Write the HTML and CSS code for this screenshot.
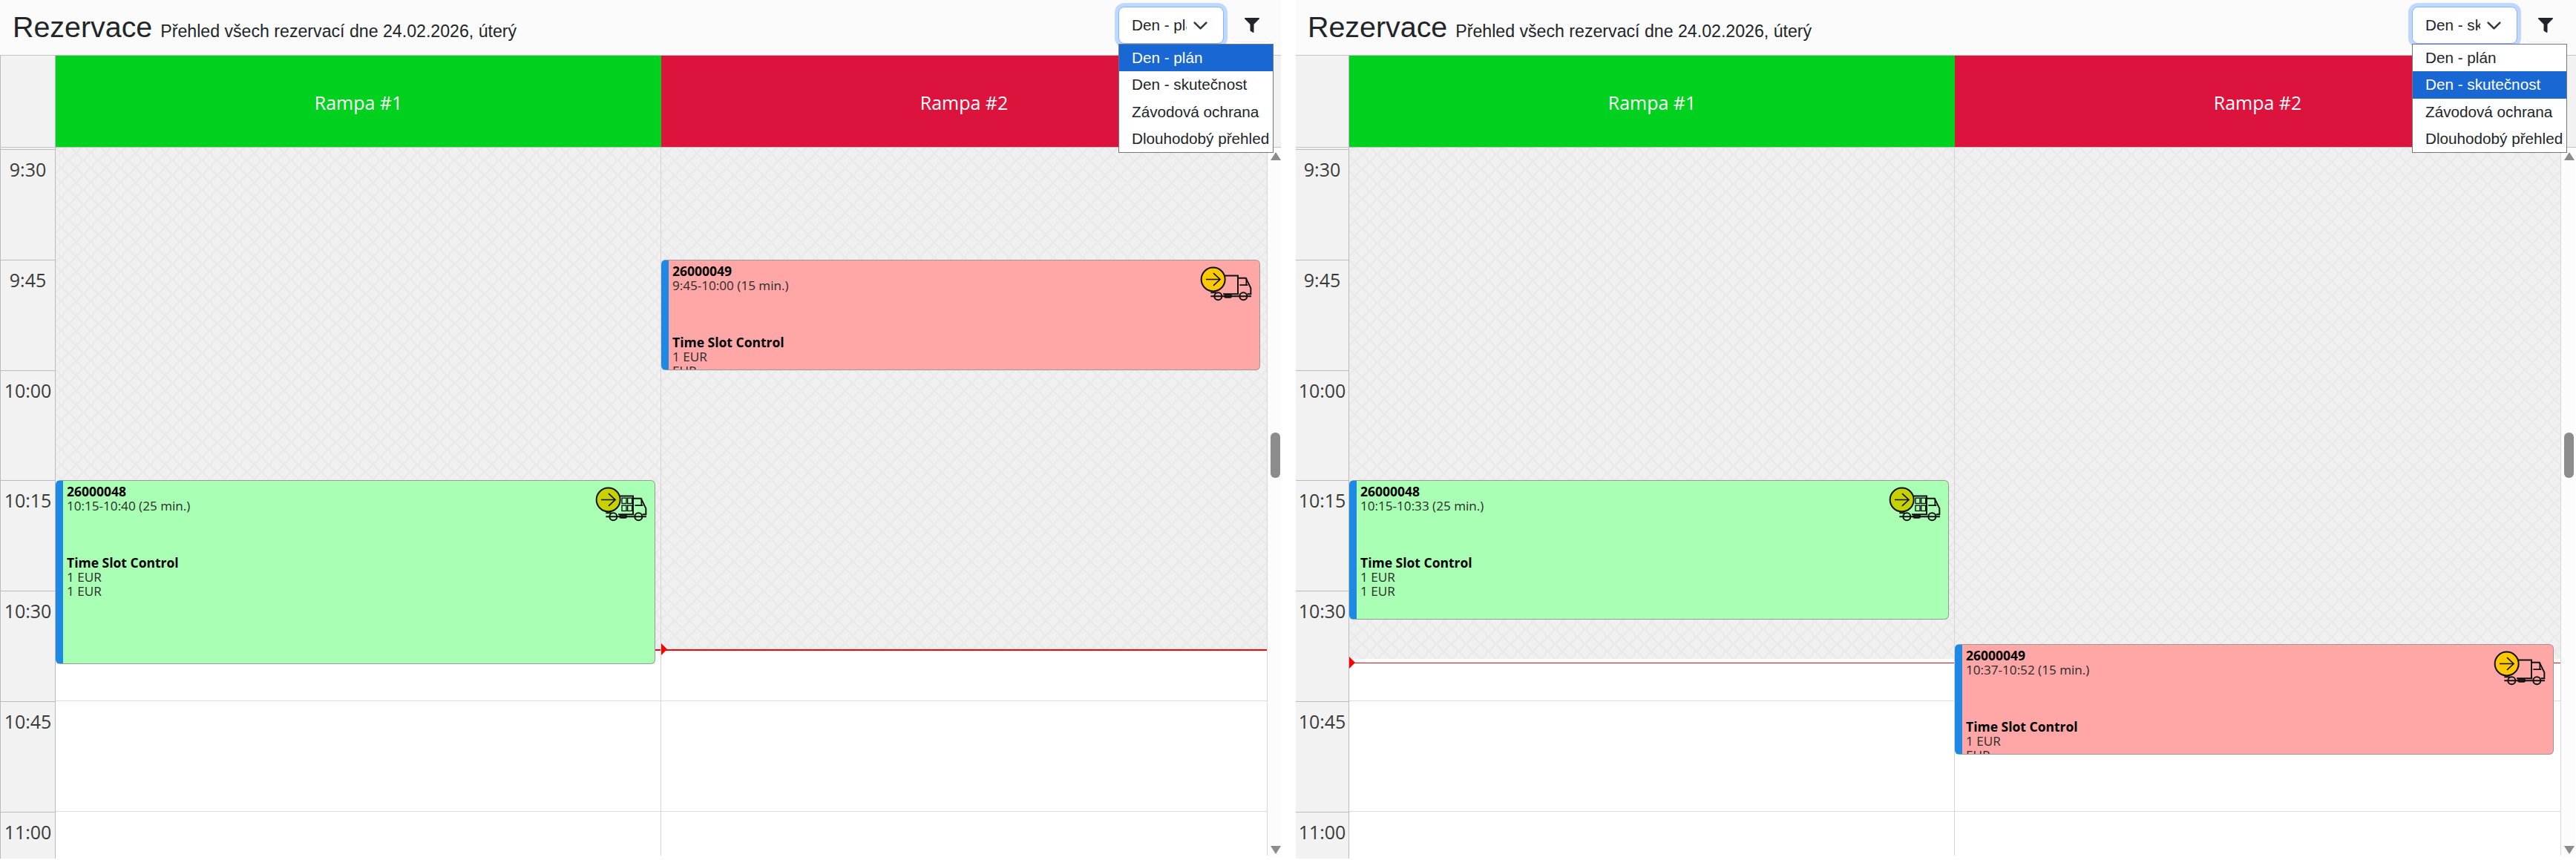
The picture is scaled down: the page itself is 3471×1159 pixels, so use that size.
FILE: index.html
```html
<!DOCTYPE html>
<html lang="cs">
<head>
    <meta charset="utf-8">
    <title>Rezervace</title>
    <link rel="stylesheet" href="styles.css">
</head>
<body>
    <svg class="defs" width="0" height="0">
        <defs>
            <symbol id="truck" viewBox="175 85 210 140">
                <g fill="none" stroke="#111" stroke-width="6">
                    <path d="M275 122H328V196M328 132H360L380 172V196H366M218 205H382M268 196H332M218 190H240"/>
                    <path d="M335 160H368M362 132V160" stroke-width="5"/>
                    <circle cx="248" cy="205" r="15"/>
                    <circle cx="350" cy="205" r="15"/>
                    <rect x="275" y="199" width="26" height="11" rx="4"/>
                </g>
            </symbol>
            <symbol id="arrow" viewBox="175 85 210 140">
                <circle cx="228" cy="137" r="48" fill="currentColor" stroke="#111" stroke-width="6"/>
                <path d="M199 137H256M229 112L256 137L229 162" fill="none" stroke="#111" stroke-width="5"/>
            </symbol>
            <symbol id="crates" viewBox="175 85 210 140">
                <g fill="none" stroke="#111" stroke-width="4">
                    <rect x="283" y="130" width="18" height="22"/>
                    <rect x="306" y="130" width="18" height="22"/>
                    <rect x="283" y="160" width="18" height="22"/>
                    <rect x="306" y="160" width="18" height="22"/>
                </g>
            </symbol>
            <symbol id="filter" viewBox="0 0 512 512">
                <path d="M488 0H24C3 0-8 26 7 41l185 185v206c0 8 4 15 10 20l80 56c16 11 38 0 38-20V226L505 41c15-15 4-41-17-41z"/>
            </symbol>
            <symbol id="chevron" viewBox="0 0 16 16">
                <path d="M2 5l6 6 6-6" fill="none" stroke="#343a40" stroke-width="2" stroke-linecap="round" stroke-linejoin="round"/>
            </symbol>
        </defs>
    </svg>

    <div class="page">
        <section class="pane pane-plan">
            <header class="top">
                <div class="title-box">
                    <h1 class="title">Rezervace</h1>
                    <span class="subtitle">Přehled všech rezervací dne 24.02.2026, úterý</span>
                </div>
                <div class="tools">
                    <div class="select">
                        <span class="select-text">Den - plán</span>
                        <svg class="chevron"><use href="#chevron"/></svg>
                        <ul class="options">
                            <li class="option selected">Den - plán</li>
                            <li class="option">Den - skutečnost</li>
                            <li class="option">Závodová ochrana</li>
                            <li class="option">Dlouhodobý přehled</li>
                        </ul>
                    </div>
                    <button class="filter-btn" type="button"><svg class="filter-icon"><use href="#filter"/></svg></button>
                </div>
            </header>
            <div class="cal-head">
                <div class="corner"></div>
                <div class="ramp ramp-green">Rampa #1</div>
                <div class="ramp ramp-red">Rampa #2</div>
                <div class="gutter"></div>
            </div>
            <div class="cal-body">
                <div class="times">
                    <div class="time">9:30</div>
                    <div class="time">9:45</div>
                    <div class="time">10:00</div>
                    <div class="time">10:15</div>
                    <div class="time">10:30</div>
                    <div class="time">10:45</div>
                    <div class="time">11:00</div>
                </div>
                <div class="col">
                    <div class="slots"><div class="slot"></div><div class="slot"></div><div class="slot"></div><div class="slot"></div><div class="slot"></div><div class="slot"></div><div class="slot"></div></div>
                    <div class="past" style="height: 677px"></div>
                    <div class="now" style="top: 676px"></div>
                    <article class="event event-green" style="top: 448px; height: 248px">
                        <b>26000048</b>
                        <span>10:15-10:40 (25 min.)</span>
                        <b class="event-type">Time Slot Control</b>
                        <span>1 EUR</span>
                        <span>1 EUR</span>
                        <svg class="truck"><use href="#truck"/><use href="#crates"/><use href="#arrow"/></svg>
                    </article>
                </div>
                <div class="col col-last">
                    <div class="slots"><div class="slot"></div><div class="slot"></div><div class="slot"></div><div class="slot"></div><div class="slot"></div><div class="slot"></div><div class="slot"></div></div>
                    <div class="past" style="height: 677px"></div>
                    <div class="now" style="top: 676px"><i class="now-mark"></i></div>
                    <article class="event event-red" style="top: 151px; height: 149px">
                        <b>26000049</b>
                        <span>9:45-10:00 (15 min.)</span>
                        <b class="event-type">Time Slot Control</b>
                        <span>1 EUR</span>
                        <span>EUR</span>
                        <svg class="truck"><use href="#truck"/><use href="#arrow"/></svg>
                    </article>
                </div>
                <div class="scrollbar">
                    <i class="arrow-up"></i>
                    <i class="thumb"></i>
                    <i class="arrow-down"></i>
                </div>
            </div>
        </section>

        <section class="pane pane-real">
            <header class="top">
                <div class="title-box">
                    <h1 class="title">Rezervace</h1>
                    <span class="subtitle">Přehled všech rezervací dne 24.02.2026, úterý</span>
                </div>
                <div class="tools">
                    <div class="select">
                        <span class="select-text">Den - skutečnost</span>
                        <svg class="chevron"><use href="#chevron"/></svg>
                        <ul class="options">
                            <li class="option">Den - plán</li>
                            <li class="option selected">Den - skutečnost</li>
                            <li class="option">Závodová ochrana</li>
                            <li class="option">Dlouhodobý přehled</li>
                        </ul>
                    </div>
                    <button class="filter-btn" type="button"><svg class="filter-icon"><use href="#filter"/></svg></button>
                </div>
            </header>
            <div class="cal-head">
                <div class="corner"></div>
                <div class="ramp ramp-green">Rampa #1</div>
                <div class="ramp ramp-red">Rampa #2</div>
                <div class="gutter"></div>
            </div>
            <div class="cal-body">
                <div class="times">
                    <div class="time">9:30</div>
                    <div class="time">9:45</div>
                    <div class="time">10:00</div>
                    <div class="time">10:15</div>
                    <div class="time">10:30</div>
                    <div class="time">10:45</div>
                    <div class="time">11:00</div>
                </div>
                <div class="col">
                    <div class="slots"><div class="slot"></div><div class="slot"></div><div class="slot"></div><div class="slot"></div><div class="slot"></div><div class="slot"></div><div class="slot"></div></div>
                    <div class="past" style="height: 689px"></div>
                    <div class="now now-thin" style="top: 694px"><i class="now-mark"></i></div>
                    <article class="event event-green" style="top: 448px; height: 188px">
                        <b>26000048</b>
                        <span>10:15-10:33 (25 min.)</span>
                        <b class="event-type">Time Slot Control</b>
                        <span>1 EUR</span>
                        <span>1 EUR</span>
                        <svg class="truck"><use href="#truck"/><use href="#crates"/><use href="#arrow"/></svg>
                    </article>
                </div>
                <div class="col col-last">
                    <div class="slots"><div class="slot"></div><div class="slot"></div><div class="slot"></div><div class="slot"></div><div class="slot"></div><div class="slot"></div><div class="slot"></div></div>
                    <div class="past" style="height: 689px"></div>
                    <div class="now now-thin" style="top: 694px"></div>
                    <article class="event event-red" style="top: 669px; height: 149px">
                        <b>26000049</b>
                        <span>10:37-10:52 (15 min.)</span>
                        <b class="event-type">Time Slot Control</b>
                        <span>1 EUR</span>
                        <span>EUR</span>
                        <svg class="truck"><use href="#truck"/><use href="#arrow"/></svg>
                    </article>
                </div>
                <div class="scrollbar">
                    <i class="arrow-up"></i>
                    <i class="thumb"></i>
                    <i class="arrow-down"></i>
                </div>
            </div>
        </section>
    </div>
</body>
</html>
```

FILE: styles.css
```css
* {
    box-sizing: border-box;
}
html, body {
    margin: 0;
    height: 100%;
    overflow: hidden;
    background: #fff;
}
body {
    font-family: "Liberation Sans", Arial, sans-serif;
    color: #212529;
}
.defs {
    position: absolute;
}
.page {
    display: flex;
    gap: 20px;
    height: 1159px;
}
.pane {
    flex: none;
    --time-w: 75px;
    --tools-pad: 12px;
}
.pane-plan {
    width: 1726px;
}
.pane-real {
    width: 1725px;
    --time-w: 72px;
    --tools-pad: 14px;
}

/* header */
.top {
    display: flex;
    justify-content: space-between;
    height: 74px;
    padding: 9px var(--tools-pad) 0 17px;
    background: #fbfbfb;
}
.pane-real .top {
    padding-left: 16px;
}
.title-box {
    display: flex;
    align-items: baseline;
    gap: 11px;
    padding-top: 5px;
}
.title {
    margin: 0;
    font-size: 39.4px;
    font-weight: 400;
    line-height: 44px;
}
.subtitle {
    font-size: 23.15px;
}
.tools {
    display: flex;
    gap: 11px;
}
.select {
    position: relative;
    display: flex;
    align-items: center;
    width: 142px;
    height: 50px;
    padding-left: 17px;
    background: #fff;
    border: 1px solid #86b7fe;
    border-radius: 8px;
    box-shadow: 0 0 0 5px #bfd8fe;
    font-size: 20.7px;
}
.select-text {
    width: 74px;
    overflow: hidden;
    white-space: nowrap;
}
.chevron {
    width: 21px;
    height: 21px;
    margin-left: 8px;
}
.options {
    position: absolute;
    left: -1px;
    top: 49px;
    z-index: 5;
    width: 209px;
    margin: 0;
    padding: 0;
    list-style: none;
    background: #fff;
    border: 1px solid #767676;
}
.option {
    height: 36.25px;
    padding-left: 17px;
    line-height: 36.25px;
    white-space: nowrap;
}
.option.selected {
    background: #1967d2;
    color: #fff;
}
.filter-btn {
    display: flex;
    justify-content: center;
    width: 54px;
    height: 48px;
    padding: 15px 0 0;
    background: #fbfbfb;
    border: none;
    border-bottom: 1px solid #eee;
    border-radius: 6px;
}
.filter-icon {
    width: 22px;
    height: 20px;
    fill: #212529;
}

/* calendar */
.cal-head {
    display: flex;
    height: 125px;
    border-top: 1px solid #c4c4c4;
    border-bottom: 1px solid #c4c4c4;
}
.corner {
    flex: none;
    width: var(--time-w);
    background: #f2f2f2;
    border-right: 1px solid #bbb;
}
.pane-plan .corner, .pane-plan .times {
    border-left: 1px solid #bbb;
}
.ramp {
    flex: none;
    display: flex;
    align-items: center;
    justify-content: center;
    width: 816px;
    padding-top: 2px;
    color: #fff;
    font-family: "Open Sans", sans-serif;
    font-size: 25px;
}
.ramp-green {
    background: #00d11e;
}
.ramp-red {
    background: #dc133c;
}
.gutter {
    flex: 1;
    background: #f2f2f2;
}
.cal-body {
    display: flex;
    height: 960px;
}
.times {
    flex: none;
    width: var(--time-w);
    height: 958px;
    padding-top: 2px;
    overflow: hidden;
    background: #f2f2f2;
    border-right: 1px solid #bbb;
}
.time {
    height: 148.75px;
    padding-top: 9px;
    border-top: 1px solid #bbb;
    font-family: "Open Sans", sans-serif;
    font-size: 25px;
    line-height: 34px;
    text-align: center;
    color: #3a3a3a;
}
.col {
    position: relative;
    flex: none;
    width: 816px;
    height: 954px;
    overflow: hidden;
    border-right: 1px solid #d4d4d4;
}
.col-last {
    border-right: none;
}
.slots {
    padding-top: 1px;
}
.slot {
    height: 148.75px;
    border-top: 1px solid #ddd;
}
.past {
    position: absolute;
    left: 0;
    right: 0;
    top: 0;
    background-color: #f0f0f0;
    background-image:
        repeating-linear-gradient(45deg, transparent 0 11px, #eaeaea 11px 14.14px),
        repeating-linear-gradient(-45deg, transparent 0 11px, #eaeaea 11px 14.14px);
}
.now {
    position: absolute;
    left: 0;
    right: 0;
    height: 2px;
    background: #f00;
}
.now-thin {
    height: 1px;
    background: #e01010;
}
.now-mark {
    position: absolute;
    left: 0;
    top: -8px;
    width: 8px;
    height: 16px;
    background: #f00;
    clip-path: polygon(0 0, 100% 50%, 0 100%);
}
.event {
    position: absolute;
    left: 0;
    width: 808px;
    display: flex;
    flex-direction: column;
    padding: 5px 0 0 5px;
    overflow: hidden;
    border: 1px solid #999;
    border-left: 10px solid #1e88e5;
    border-radius: 6px;
    font-family: "Open Sans", sans-serif;
    font-size: 17.1px;
    line-height: 19.2px;
}
.col-last .event {
    width: 807px;
}
.event b {
    color: #000;
    font-size: 17.5px;
}
.event span {
    color: #2b2b2b;
}
.event-green {
    background: #a9ffb4;
}
.event-red {
    background: #ffa6a6;
}
.event .event-type {
    margin-top: 57.6px;
}
.truck {
    position: absolute;
    right: 10px;
    top: 8px;
    width: 70px;
    height: 47px;
}
.event-green .truck {
    color: #c6d100;
}
.event-red .truck {
    color: #ffc800;
}

/* scrollbar drawn like the browser's one */
.scrollbar {
    position: relative;
    flex: none;
    width: 19px;
    height: 954px;
    background: #fcfcfc;
    border-left: 1px solid #d8d8d8;
}
.arrow-up, .arrow-down {
    position: absolute;
    left: 4px;
    width: 14px;
    height: 11px;
    background: #8c8c8c;
}
.arrow-up {
    top: 6px;
    clip-path: polygon(50% 0, 100% 100%, 0 100%);
}
.arrow-down {
    bottom: 2px;
    clip-path: polygon(0 0, 100% 0, 50% 100%);
}
.thumb {
    position: absolute;
    left: 4px;
    top: 384px;
    width: 13px;
    height: 61px;
    background: #8c8c8c;
    border-radius: 6px;
}
```
